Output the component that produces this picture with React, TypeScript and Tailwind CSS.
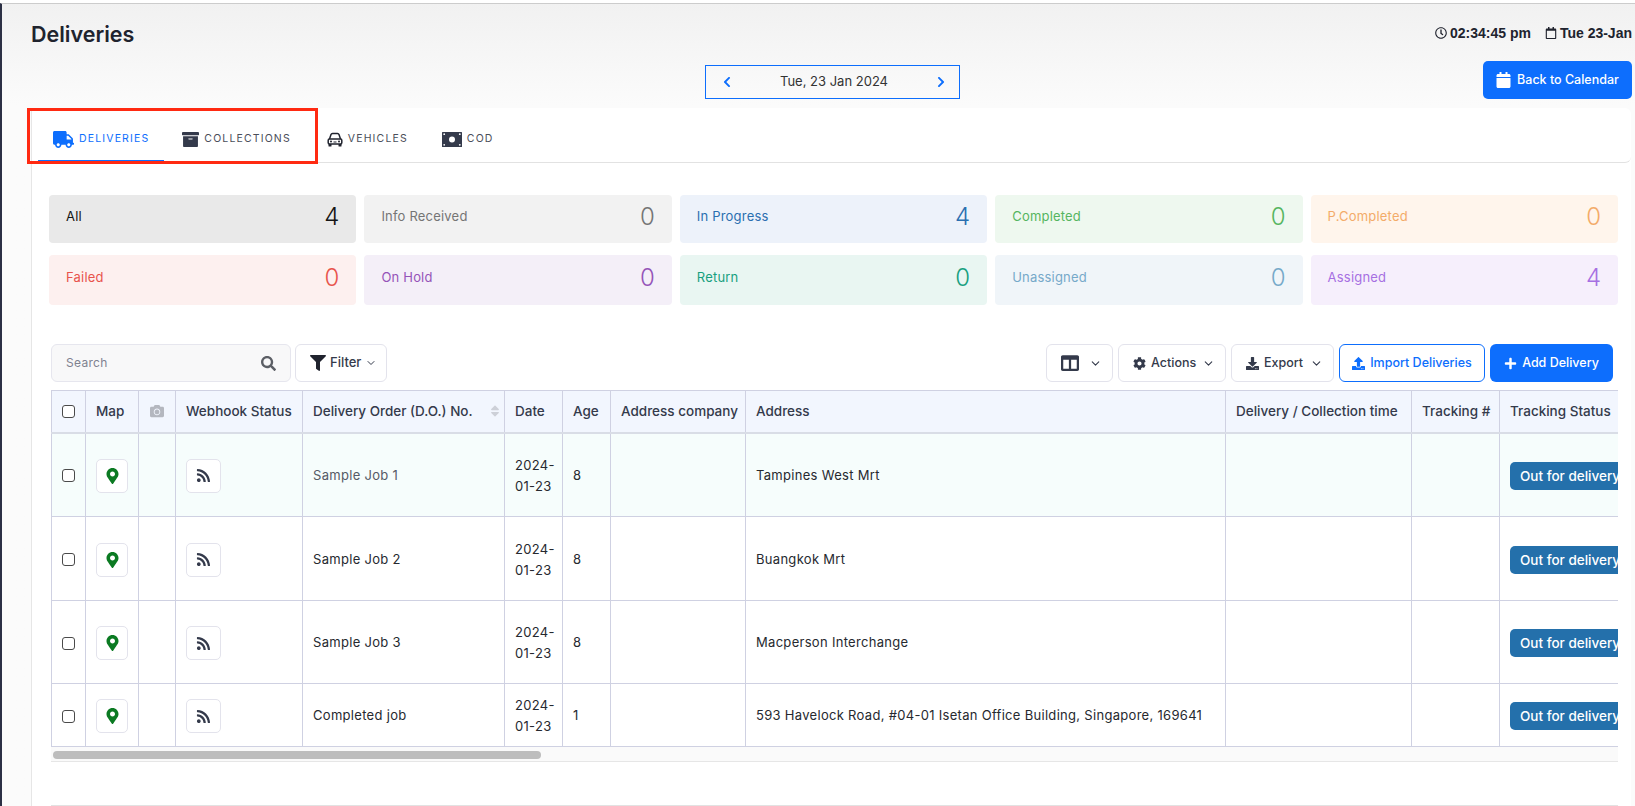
import React from "react";
import { ChevronDown } from "lucide-react";
import {
  FaArchive,
  FaCalendar,
  FaCamera,
  FaChevronLeft,
  FaChevronRight,
  FaCog,
  FaColumns,
  FaDownload,
  FaFilter,
  FaMapMarkerAlt,
  FaPlus,
  FaRegCalendar,
  FaRegClock,
  FaRss,
  FaSearch,
  FaSort,
  FaTruck,
  FaUpload,
} from "react-icons/fa";

const cards = [
  { label: "All", value: 4, box: "bg-[#e9e9e9] text-[#151515]" },
  { label: "Info Received", value: 0, box: "bg-[#f2f2f2] text-[#757575]" },
  { label: "In Progress", value: 4, box: "bg-[#edf2fa] text-[#2a6fb0]" },
  { label: "Completed", value: 0, box: "bg-[#eef8ef] text-[#55b560]" },
  { label: "P.Completed", value: 0, box: "bg-[#fff5ec] text-[#f3ab69]" },
  { label: "Failed", value: 0, box: "bg-[#fdf0ef] text-[#e8534c]" },
  { label: "On Hold", value: 0, box: "bg-[#f4eff8] text-[#9554b8]" },
  { label: "Return", value: 0, box: "bg-[#e9f6f2] text-[#17a07f]" },
  { label: "Unassigned", value: 0, box: "bg-[#f0f5f9] text-[#76a9c9]" },
  { label: "Assigned", value: 4, box: "bg-[#f6effc] text-[#a66fe2]" },
];

const rows = [
  { order: "Sample Job 1", age: 8, address: "Tampines West Mrt", tr: "h-[84px] bg-[#f6fdfc]", orderText: "text-[#555a66]" },
  { order: "Sample Job 2", age: 8, address: "Buangkok Mrt", tr: "h-[84px] bg-white", orderText: "" },
  { order: "Sample Job 3", age: 8, address: "Macperson Interchange", tr: "h-[83px] bg-white", orderText: "" },
  {
    order: "Completed job",
    age: 1,
    address: "593 Havelock Road, #04-01 Isetan Office Building, Singapore, 169641",
    tr: "h-[63px] bg-white",
    orderText: "",
  },
];

const th = "whitespace-nowrap border border-[#cfd1e2] border-b-2 border-b-[#d9dde6] px-[10px] text-left text-[13.5px] font-medium text-[#343a4b]";
const td = "border border-[#cfd1e2] px-[10px] pt-[2px] text-[13px] tracking-[0.3px]";

function Check() {
  return <input type="checkbox" readOnly className="block h-[13px] w-[13px] appearance-none rounded-[3px] border border-[#4a4a4a] bg-white" />;
}

function CarIcon() {
  return (
    <svg viewBox="0 0 16 15" className="h-[15px] w-[16px] text-[#20232e]" fill="none" stroke="currentColor">
      <path d="M2.5 7 4 2.6Q4.4 1.5 5.5 1.5H10.5Q11.6 1.5 12 2.6L13.5 7" strokeWidth="1.5" />
      <rect x="1.2" y="7" width="13.6" height="5" rx="1.2" strokeWidth="1.5" />
      <circle cx="4" cy="9.5" r="1" fill="currentColor" stroke="none" />
      <circle cx="12" cy="9.5" r="1" fill="currentColor" stroke="none" />
      <path d="M6.5 10h3" strokeWidth="1" />
      <rect x="1.5" y="12" width="3" height="2.5" rx="0.5" fill="currentColor" stroke="none" />
      <rect x="11.5" y="12" width="3" height="2.5" rx="0.5" fill="currentColor" stroke="none" />
    </svg>
  );
}

function CashIcon() {
  return (
    <svg viewBox="0 0 20 15" className="h-[15px] w-[20px] text-[#343a4b]">
      <rect width="20" height="15" fill="currentColor" rx="0.5" />
      <circle cx="10" cy="7.5" r="3" fill="#fff" />
      <circle cx="2.2" cy="2.2" r="0.9" fill="#fff" />
      <circle cx="17.8" cy="2.2" r="0.9" fill="#fff" />
      <circle cx="2.2" cy="12.8" r="0.9" fill="#fff" />
      <circle cx="17.8" cy="12.8" r="0.9" fill="#fff" />
    </svg>
  );
}

function Tab({ icon, label, pad, active = false }: { icon: React.ReactNode; label: string; pad: string; active?: boolean }) {
  return (
    <div
      className={`flex h-[54px] items-center gap-[5px] border-b-2 pt-[10px] text-[10.5px] tracking-[1.15px] ${pad} ${
        active ? "border-[#0d6efd] text-[#0d6efd]" : "border-transparent text-[#4a4e5a]"
      }`}
    >
      {icon}
      {label}
    </div>
  );
}

function ToolButton({ icon, label, width }: { icon: React.ReactNode; label?: string; width: string }) {
  return (
    <button className={`flex h-[38px] items-center gap-[5px] rounded-[6px] border border-[#e3e3ec] bg-white pl-[14px] pr-[10px] text-[12.5px] font-medium text-[#343a4b] ${width}`}>
      {icon}
      {label}
      <ChevronDown className="ml-auto h-[13px] w-[13px]" />
    </button>
  );
}

export default function App() {
  return (
    <div className="h-[806px] overflow-hidden bg-white pt-[3px] font-['Inter',sans-serif]">
      <div className="h-[803px] border-t border-l-2 border-t-[#cccccc] border-l-[#2c3045] bg-gradient-to-b from-[#f1f1f1] to-[#fbfbfb] to-[100px] pl-[29px] pr-[3px]">
        <div className="flex h-[57px] items-start justify-between">
          <h1 className="pt-[14px] text-[21.5px] font-semibold leading-[32px] text-[#20232e]">Deliveries</h1>
          <div className="flex items-center pt-[19px] font-['Liberation_Sans',sans-serif] text-[14px] font-bold leading-[20px] text-[#20232e]">
            <FaRegClock className="mr-[3px] h-[12px] w-[12px]" />
            <span>02:34:45 pm</span>
            <FaRegCalendar className="ml-[14px] mr-[3px] h-[12px] w-[12px]" />
            <span>Tue 23-Jan</span>
          </div>
        </div>

        <div className="grid h-[47px] grid-cols-[1fr_auto_1fr] items-start">
          <div />
          <div className="ml-[2px] mt-[4px] flex h-[34px] w-[255px] items-center justify-between border border-[#0d6efd] pl-[15px] pr-[12px] text-[13px] text-[#333333]">
            <FaChevronLeft className="h-[12px] w-[12px] text-[#0d6efd]" />
            Tue, 23 Jan 2024
            <FaChevronRight className="h-[12px] w-[12px] text-[#0d6efd]" />
          </div>
          <button className="flex h-[38px] w-[149px] items-center justify-center gap-[6px] justify-self-end whitespace-nowrap rounded-[5px] bg-[#0d6efd] text-[12.5px] font-medium text-white">
            <FaCalendar className="h-[16px] w-[15px]" />
            Back to Calendar
          </button>
        </div>

        <div className="relative mr-[1px] h-[698px] rounded-tr-[6px] border-l border-[#e6e6e6] bg-white pr-[13px]">
          <div className="absolute left-[-5px] top-0 h-[56px] w-[291px] border-[3px] border-[#ff2a12]" />

          <div className="mr-[-13px] flex h-[55px] rounded-br-[6px] border-b border-[#e2e2e2] pl-[6px]">
            <Tab active pad="px-[15px]" label="DELIVERIES" icon={<FaTruck className="h-[19px] w-[21px]" />} />
            <Tab pad="px-[18px]" label="COLLECTIONS" icon={<FaArchive className="h-[17px] w-[17px] text-[#343a4b]" />} />
            <Tab pad="pl-[18px] pr-[16px]" label="VEHICLES" icon={<CarIcon />} />
            <Tab pad="px-[18px]" label="COD" icon={<CashIcon />} />
          </div>

          <div className="ml-[17px] mt-[32px] grid grid-cols-5 grid-rows-[48px_50px] gap-x-[8px] gap-y-[12px]">
            {cards.map((c) => (
              <div key={c.label} className={`flex items-center justify-between rounded-[4px] px-[17px] pb-[4px] ${c.box}`}>
                <span className="text-[13px] tracking-[0.2px]">{c.label}</span>
                <span className="text-[24px] font-light leading-none">{c.value}</span>
              </div>
            ))}
          </div>

          <div className="ml-[19px] mt-[39px] flex justify-between pr-[5px]">
            <div className="flex gap-[4px]">
              <div className="flex h-[38px] w-[240px] items-center justify-between rounded-[6px] border border-[#e6e6ee] bg-[#f8f8f9] pl-[14px] pr-[14px]">
                <span className="text-[12px] tracking-[0.3px] text-[#7f8290]">Search</span>
                <FaSearch className="h-[15px] w-[15px] text-[#5c5f66]" />
              </div>
              <button className="flex h-[38px] w-[92px] items-center gap-[4px] rounded-[6px] border border-[#e3e3ec] bg-white pl-[14px] text-[13px] font-medium text-[#343a4b]">
                <FaFilter className="h-[16px] w-[16px] text-[#20232e]" />
                Filter
                <ChevronDown className="h-[12px] w-[12px]" />
              </button>
            </div>
            <div className="flex gap-[5px]">
              <ToolButton width="w-[67px]" icon={<FaColumns className="h-[18px] w-[18px]" />} />
              <ToolButton width="w-[108px]" label="Actions" icon={<FaCog className="h-[13px] w-[13px]" />} />
              <ToolButton width="w-[103px]" label="Export" icon={<FaDownload className="h-[13px] w-[13px]" />} />
              <button className="flex h-[38px] w-[146px] items-center justify-center gap-[5px] rounded-[6px] border border-[#0d6efd] bg-white text-[12.5px] font-medium text-[#0d6efd]">
                <FaUpload className="h-[13px] w-[13px]" />
                Import Deliveries
              </button>
              <button className="flex h-[38px] w-[123px] items-center justify-center gap-[5px] rounded-[6px] bg-[#0d6efd] text-[12.5px] font-medium text-white">
                <FaPlus className="h-[13px] w-[13px]" />
                Add Delivery
              </button>
            </div>
          </div>

          <div className="ml-[19px] mt-[8px] overflow-hidden">
            <table className="w-[1700px] table-fixed border-collapse">
              <colgroup>
                <col className="w-[34px]" />
                <col className="w-[53px]" />
                <col className="w-[37px]" />
                <col className="w-[127px]" />
                <col className="w-[202px]" />
                <col className="w-[58px]" />
                <col className="w-[48px]" />
                <col className="w-[135px]" />
                <col className="w-[480px]" />
                <col className="w-[186px]" />
                <col className="w-[88px]" />
                <col className="w-[252px]" />
              </colgroup>
              <thead>
                <tr className="h-[42px] bg-[#f2f6fe]">
                  <th className={th}><Check /></th>
                  <th className={th}>Map</th>
                  <th className={th}><FaCamera className="h-[14px] w-[16px] text-[#b4b7bf]" /></th>
                  <th className={th}>Webhook Status</th>
                  <th className={th}>
                    <div className="flex items-center justify-between">
                      Delivery Order (D.O.) No.
                      <FaSort className="mr-[-6px] h-[14px] w-[10px] text-[#cdd0d8]" />
                    </div>
                  </th>
                  <th className={th}>Date</th>
                  <th className={th}>Age</th>
                  <th className={th}>Address company</th>
                  <th className={th}>Address</th>
                  <th className={th}>Delivery / Collection time</th>
                  <th className={th}>Tracking #</th>
                  <th className={th}>Tracking Status</th>
                </tr>
              </thead>
              <tbody>
                {rows.map((r) => (
                  <tr key={r.order} className={`${r.tr} text-[#26292f]`}>
                    <td className={td}><Check /></td>
                    <td className={td}>
                      <div className="flex h-[34px] w-[32px] items-center justify-center rounded-[5px] border border-[#e3e3ec] bg-white">
                        <FaMapMarkerAlt className="h-[16px] w-[13px] text-[#0b7a22]" />
                      </div>
                    </td>
                    <td className={td} />
                    <td className={td}>
                      <div className="flex h-[34px] w-[35px] items-center justify-center rounded-[5px] border border-[#e3e3ec] bg-white">
                        <FaRss className="h-[15px] w-[15px] text-[#343a4b]" />
                      </div>
                    </td>
                    <td className={`${td} ${r.orderText}`}>{r.order}</td>
                    <td className={`${td} leading-[21px]`}>2024-01-23</td>
                    <td className={td}>{r.age}</td>
                    <td className={td} />
                    <td className={td}>{r.address}</td>
                    <td className={td} />
                    <td className={td} />
                    <td className={td}>
                      <span className="inline-block h-[28px] whitespace-nowrap rounded-[5px] bg-[#2470ab] px-[10px] text-[13.5px] font-medium leading-[28px] tracking-normal text-white">
                        Out for delivery
                      </span>
                    </td>
                  </tr>
                ))}
              </tbody>
            </table>
          </div>

          <div className="ml-[19px] h-[15px] border-b border-[#e6e6e6] bg-[#fafafa] pl-[2px] pt-[4px]">
            <div className="h-[8px] w-[488px] rounded-full bg-[#bdbdbd]" />
          </div>
          <div className="ml-[19px] mt-[43px] border-t border-[#e2e2e2]" />
        </div>
      </div>
    </div>
  );
}
